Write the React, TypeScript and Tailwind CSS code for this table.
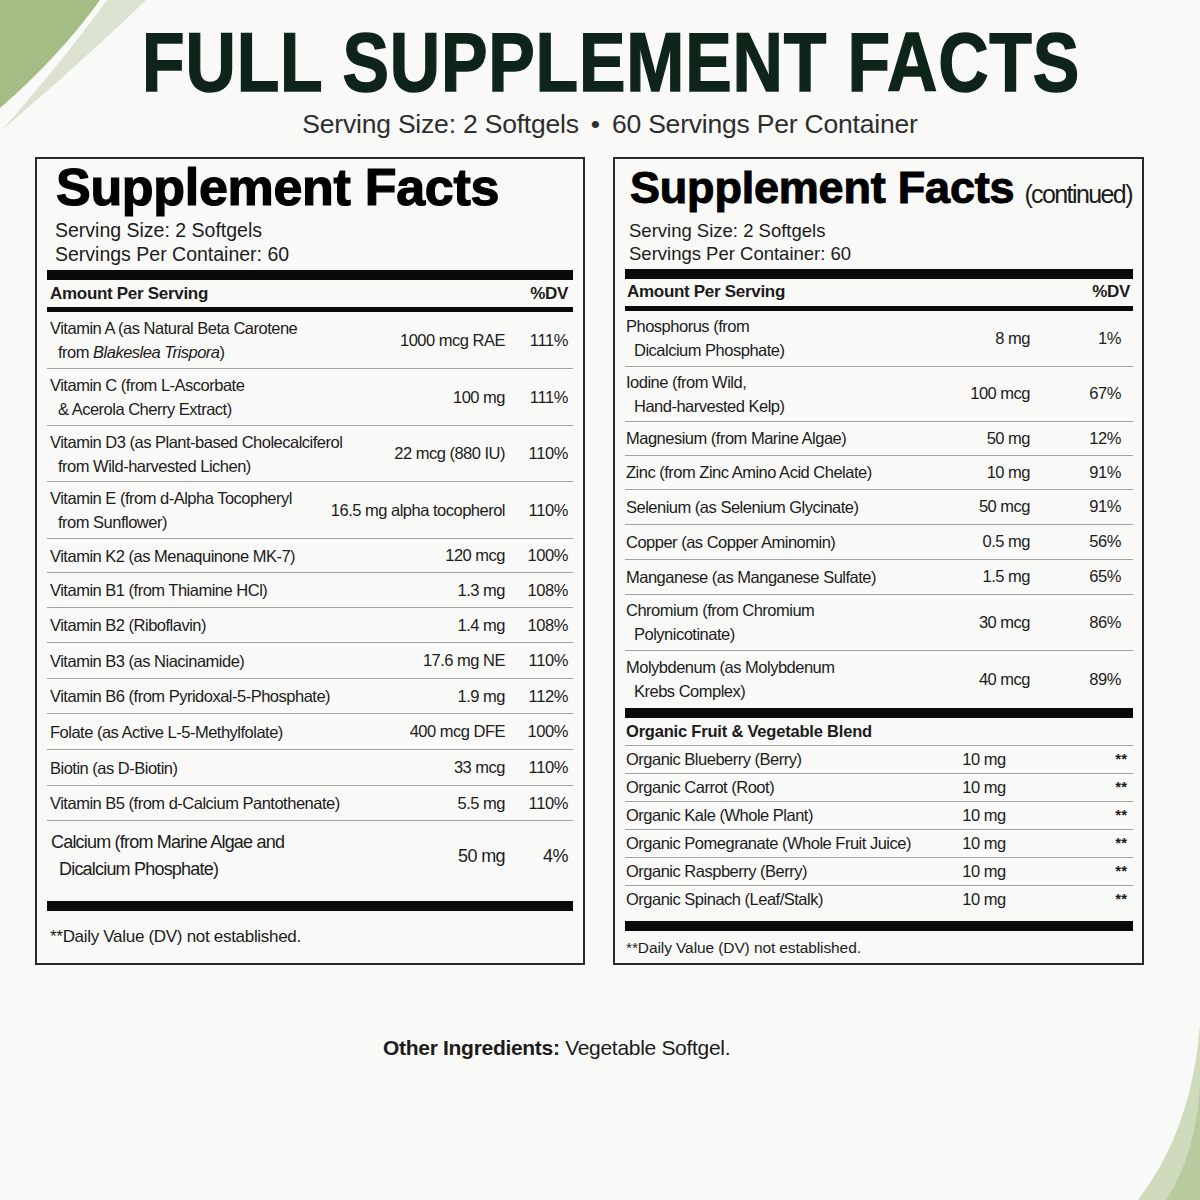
import React from 'react';

type Fact = {
  lines: React.ReactNode[];
  amount: string;
  dv: string;
  h: string;
  last?: boolean;
};

const leftFacts: Fact[] = [
  { lines: ['Vitamin A (as Natural Beta Carotene', <>from <i>Blakeslea Trispora</i>)</>], amount: '1000 mcg RAE', dv: '111%', h: 'h-[57px]' },
  { lines: ['Vitamin C (from L-Ascorbate', '& Acerola Cherry Extract)'], amount: '100 mg', dv: '111%', h: 'h-[57px]' },
  { lines: ['Vitamin D3 (as Plant-based Cholecalciferol', 'from Wild-harvested Lichen)'], amount: '22 mcg (880 IU)', dv: '110%', h: 'h-[56px]' },
  { lines: ['Vitamin E (from d-Alpha Tocopheryl', 'from Sunflower)'], amount: '16.5 mg alpha tocopherol', dv: '110%', h: 'h-[57px]' },
  { lines: ['Vitamin K2 (as Menaquinone MK-7)'], amount: '120 mcg', dv: '100%', h: 'h-[34px]' },
  { lines: ['Vitamin B1 (from Thiamine HCl)'], amount: '1.3 mg', dv: '108%', h: 'h-[35px]' },
  { lines: ['Vitamin B2 (Riboflavin)'], amount: '1.4 mg', dv: '108%', h: 'h-[35px]' },
  { lines: ['Vitamin B3 (as Niacinamide)'], amount: '17.6 mg NE', dv: '110%', h: 'h-[36px]' },
  { lines: ['Vitamin B6 (from Pyridoxal-5-Phosphate)'], amount: '1.9 mg', dv: '112%', h: 'h-[35px]' },
  { lines: ['Folate (as Active L-5-Methylfolate)'], amount: '400 mcg DFE', dv: '100%', h: 'h-[36px]' },
  { lines: ['Biotin (as D-Biotin)'], amount: '33 mcg', dv: '110%', h: 'h-[36px]' },
  { lines: ['Vitamin B5 (from d-Calcium Pantothenate)'], amount: '5.5 mg', dv: '110%', h: 'h-[35px]' },
];

const rightFacts: Fact[] = [
  { lines: ['Phosphorus (from', 'Dicalcium Phosphate)'], amount: '8 mg', dv: '1%', h: 'h-[56px]' },
  { lines: ['Iodine (from Wild,', 'Hand-harvested Kelp)'], amount: '100 mcg', dv: '67%', h: 'h-[55px]' },
  { lines: ['Magnesium (from Marine Algae)'], amount: '50 mg', dv: '12%', h: 'h-[34px]' },
  { lines: ['Zinc (from Zinc Amino Acid Chelate)'], amount: '10 mg', dv: '91%', h: 'h-[34px]' },
  { lines: ['Selenium (as Selenium Glycinate)'], amount: '50 mcg', dv: '91%', h: 'h-[35px]' },
  { lines: ['Copper (as Copper Aminomin)'], amount: '0.5 mg', dv: '56%', h: 'h-[35px]' },
  { lines: ['Manganese (as Manganese Sulfate)'], amount: '1.5 mg', dv: '65%', h: 'h-[35px]' },
  { lines: ['Chromium (from Chromium', 'Polynicotinate)'], amount: '30 mcg', dv: '86%', h: 'h-[56px]' },
  { lines: ['Molybdenum (as Molybdenum', 'Krebs Complex)'], amount: '40 mcg', dv: '89%', h: 'h-[57px]', last: true },
];

const blend = [
  'Organic Blueberry (Berry)',
  'Organic Carrot (Root)',
  'Organic Kale (Whole Plant)',
  'Organic Pomegranate (Whole Fruit Juice)',
  'Organic Raspberry (Berry)',
  'Organic Spinach (Leaf/Stalk)',
];

const FactRow = ({ f, dvCol, pr, pl }: { f: Fact; dvCol: string; pr: string; pl: string }) => (
  <div className={`flex items-center ${f.h} ${pr} ${f.last ? '' : 'border-b-[1.5px] border-[#a3a3a3]'}`}>
    <div className={`flex-1 text-[16.5px] leading-[24px] tracking-[-0.5px] ${pl}`}>
      {f.lines.map((l, i) => (
        <div key={i} className={i > 0 ? 'pl-[8px]' : ''}>{l}</div>
      ))}
    </div>
    <div className="text-[16.5px] tracking-[-0.5px] text-right whitespace-nowrap">{f.amount}</div>
    <div className={`${dvCol} text-[16.5px] tracking-[-0.4px] text-right`}>{f.dv}</div>
  </div>
);

export default function App() {
  return (
    <div className="relative w-[1200px] h-[1200px] overflow-hidden bg-[#f9f9f7] font-['Liberation_Sans',Arial,sans-serif] text-[#1c1c1c]">
      <svg className="absolute left-0 top-0" width="160" height="140" viewBox="0 0 160 140">
        <path d="M0,0 L100,0 Q58,58 0,108 Z" fill="#a4bd85" />
        <path d="M146,0 Q86,58 2,130 Q62,62 107,0 Z" fill="#dbe2cf" />
      </svg>
      <svg className="absolute right-0 bottom-0" width="100" height="200" viewBox="0 0 100 200">
        <path d="M100,25 Q92,130 38,200 L100,200 Z" fill="#cfdbbc" />
        <path d="M100,85 Q96,155 66,200 L100,200 Z" fill="#b8cb9e" />
      </svg>

      <div className="relative flex flex-col items-center pt-[20px]">
        <div className="pl-[22px] h-[84px]">
          <h1 className="scale-x-[0.83] text-[84px] leading-[84px] font-bold text-[#0f2418] tracking-[1px] whitespace-nowrap [-webkit-text-stroke:1.5px_#0f2418]">
            FULL SUPPLEMENT FACTS
          </h1>
        </div>
        <p className="mt-[5px] pl-[20px] text-[26.5px] leading-[30px] text-[#2e2e2e] tracking-[-0.2px]">
          Serving Size: 2 Softgels<span className="mx-[12px]">•</span>60 Servings Per Container
        </p>
      </div>

      <div className="relative flex gap-[28px] pl-[35px] mt-[18px]">
        {/* left label */}
        <div className="w-[550px] h-[808px] border-2 border-[#2a2a2a] px-[10px] flex flex-col">
          <h2 className="mt-[3px] pl-[9px] text-[52px] leading-[51px] font-bold text-black tracking-[-0.3px] whitespace-nowrap [-webkit-text-stroke:1.2px_black]">
            Supplement Facts
          </h2>
          <div className="mt-[5px] pl-[8px] text-[19.5px] leading-[24px]">
            <div>Serving Size: 2 Softgels</div>
            <div>Servings Per Container: 60</div>
          </div>
          <div className="mt-[4px] h-[10px] bg-[#0a0a0a]" />
          <div className="h-[27px] flex items-center justify-between pl-[3px] pr-[5px] text-[17px] font-bold tracking-[-0.3px]">
            <span>Amount Per Serving</span>
            <span>%DV</span>
          </div>
          <div className="h-[5px] bg-[#0a0a0a]" />
          {leftFacts.map((f, i) => (
            <FactRow key={i} f={f} dvCol="w-[63px]" pr="pr-[5px]" pl="pl-[3px]" />
          ))}
          <div className="h-[70px] flex items-center pr-[5px]">
            <div className="flex-1 text-[18px] leading-[27px] tracking-[-0.8px] pl-[4px]">
              <div>Calcium (from Marine Algae and</div>
              <div className="pl-[8px]">Dicalcium Phosphate)</div>
            </div>
            <div className="text-[18px] tracking-[-0.6px]">50 mg</div>
            <div className="w-[63px] text-right text-[18px] tracking-[-0.5px]">4%</div>
          </div>
          <div className="mt-[10px] h-[10px] bg-[#0a0a0a]" />
          <p className="mt-[16px] pl-[3px] text-[17px] leading-[20px] tracking-[-0.3px]">**Daily Value (DV) not established.</p>
        </div>

        {/* right label */}
        <div className="w-[531px] h-[808px] border-2 border-[#2a2a2a] pl-[10px] pr-[9px] flex flex-col">
          <div className="mt-[6px] pl-[5px] flex items-baseline whitespace-nowrap">
            <h2 className="text-[45px] leading-[45px] font-bold text-black tracking-[-0.2px] [-webkit-text-stroke:1px_black]">
              Supplement Facts
            </h2>
            <span className="ml-[10px] text-[25px] tracking-[-1.6px]">(continued)</span>
          </div>
          <div className="mt-[5px] pl-[4px] text-[18.5px] leading-[23px]">
            <div>Serving Size: 2 Softgels</div>
            <div>Servings Per Container: 60</div>
          </div>
          <div className="mt-[4px] h-[10px] bg-[#0a0a0a]" />
          <div className="h-[27px] flex items-center justify-between pl-[2px] pr-[3px] text-[17px] font-bold tracking-[-0.3px]">
            <span>Amount Per Serving</span>
            <span>%DV</span>
          </div>
          <div className="h-[5px] bg-[#0a0a0a]" />
          {rightFacts.map((f, i) => (
            <FactRow key={i} f={f} dvCol="w-[91px]" pr="pr-[12px]" pl="pl-[1px]" />
          ))}
          <div className="h-[10px] bg-[#0a0a0a]" />
          <div className="h-[28px] flex items-center pl-[1px] border-b-[1.5px] border-[#a3a3a3] text-[16.5px] font-bold tracking-[-0.2px]">
            Organic Fruit &amp; Vegetable Blend
          </div>
          {blend.map((b, i) => (
            <div
              key={b}
              className={`h-[28px] flex items-center text-[16.5px] tracking-[-0.5px] pr-[6px] ${i < blend.length - 1 ? 'border-b-[1.5px] border-[#a3a3a3]' : ''}`}
            >
              <span className="flex-1 pl-[1px]">{b}</span>
              <span className="w-[153px]">10 mg</span>
              <span className="self-start mt-[2px] text-[15px] font-bold tracking-[0px]">**</span>
            </div>
          ))}
          <div className="mt-[7px] h-[10px] bg-[#0a0a0a]" />
          <p className="mt-[7px] pl-[1px] text-[15.5px] leading-[20px] tracking-[-0.1px]">**Daily Value (DV) not established.</p>
        </div>
      </div>

      <p className="relative mt-[67px] pl-[383px] text-[21px] tracking-[-0.3px] text-[#1c1c1c]">
        <span className="font-bold">Other Ingredients:</span> Vegetable Softgel.
      </p>
    </div>
  );
}
